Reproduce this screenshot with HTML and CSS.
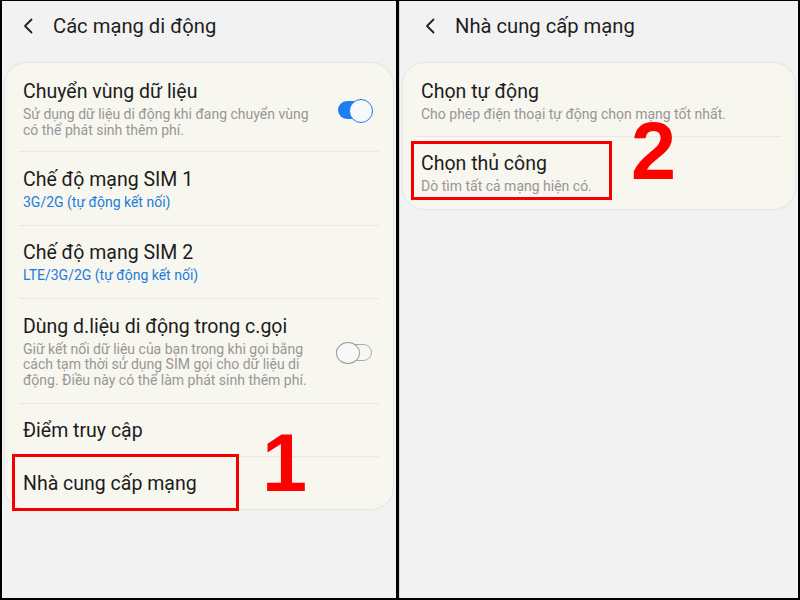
FILE: index.html
```html
<!DOCTYPE html>
<html lang="vi">
<head>
<meta charset="utf-8">
<title>Nhà cung cấp mạng</title>
<link rel="stylesheet" href="styles.css">
</head>
<body>
<div class="frame">
  <section class="panel panel-left">
    <header class="bar">
      <svg class="back" viewBox="0 0 12 16" width="12" height="16"><path d="M9.5 1.5 L3 8 L9.5 14.5" fill="none" stroke="#222" stroke-width="1.8" stroke-linecap="round" stroke-linejoin="round"/></svg>
      <h1 class="bar-title">Các mạng di động</h1>
    </header>
    <div class="card">
      <div class="item item-first">
        <div class="text">
          <div class="title">Chuyển vùng dữ liệu</div>
          <div class="sub">Sử dụng dữ liệu di động khi đang chuyển vùng<br>có thể phát sinh thêm phí.</div>
        </div>
        <span class="switch switch-on"></span>
      </div>
      <div class="item">
        <div class="text">
          <div class="title">Chế độ mạng SIM 1</div>
          <div class="sub sub-blue">3G/2G (tự động kết nối)</div>
        </div>
      </div>
      <div class="item">
        <div class="text">
          <div class="title">Chế độ mạng SIM 2</div>
          <div class="sub sub-blue">LTE/3G/2G (tự động kết nối)</div>
        </div>
      </div>
      <div class="item">
        <div class="text">
          <div class="title">Dùng d.liệu di động trong c.gọi</div>
          <div class="sub">Giữ kết nối dữ liệu của bạn trong khi gọi bằng<br>cách tạm thời sử dụng SIM gọi cho dữ liệu di<br>động. Điều này có thể làm phát sinh thêm phí.</div>
        </div>
        <span class="switch switch-off"></span>
      </div>
      <div class="item">
        <div class="text">
          <div class="title">Điểm truy cập</div>
        </div>
      </div>
      <div class="item item-last">
        <div class="text">
          <div class="title">Nhà cung cấp mạng</div>
        </div>
      </div>
    </div>
    <span class="mark mark-left"></span>
    <span class="num num-one">1</span>
  </section>
  <div class="divider"></div>
  <section class="panel panel-right">
    <header class="bar bar-right">
      <svg class="back" viewBox="0 0 12 16" width="12" height="16"><path d="M9.5 1.5 L3 8 L9.5 14.5" fill="none" stroke="#222" stroke-width="1.8" stroke-linecap="round" stroke-linejoin="round"/></svg>
      <h1 class="bar-title">Nhà cung cấp mạng</h1>
    </header>
    <div class="card">
      <div class="item item-first">
        <div class="text">
          <div class="title">Chọn tự động</div>
          <div class="sub">Cho phép điện thoại tự động chọn mạng tốt nhất.</div>
        </div>
      </div>
      <div class="item item-last">
        <div class="text">
          <div class="title">Chọn thủ công</div>
          <div class="sub">Dò tìm tất cả mạng hiện có.</div>
        </div>
      </div>
    </div>
    <span class="mark mark-right"></span>
    <span class="num num-two">2</span>
  </section>
</div>
</body>
</html>
```

FILE: styles.css
```css
* { box-sizing: border-box; }
html, body { margin: 0; padding: 0; }
body {
  width: 800px;
  height: 600px;
  background: #000;
  font-family: Roboto, "Noto Sans", "Liberation Sans", sans-serif;
  overflow: hidden;
}
.frame {
  width: 800px;
  height: 600px;
  display: flex;
  background: #000;
  padding: 1px 2px 2px 2px;
}
.panel {
  position: relative;
  background: #f2f2f2;
  height: 100%;
  padding: 0 3px;
}
.panel-left { width: 394px; }
.divider {
  width: 4px;
  height: 100%;
  background: #000;
  border-right: 1px solid #d8d8d8;
}
.panel-right { flex: 1; }

.bar {
  height: 62px;
  display: flex;
  align-items: center;
  padding-left: 17px;
  padding-bottom: 12px;
}
.bar-right { padding-left: 21px; }
.back { display: block; flex: none; margin-right: 19px; }
.bar-title {
  margin: 0;
  font-size: 20.2px;
  font-weight: 400;
  color: #1e1e1e;
}

.card {
  background: #f7f6ef;
  border-radius: 22px;
  padding: 0 14px;
  box-shadow: 0 0 0 1px #e6e5de;
}
.item {
  display: flex;
  align-items: center;
  padding: 17.5px 7px 14.5px 4px;
  border-bottom: 1px solid #e9e8e1;
}
.item-first { padding-top: 19px; padding-bottom: 13px; }
.item-last { border-bottom: none; }
.text { flex: 1; min-width: 0; }
.title {
  font-size: 19.5px;
  line-height: 20px;
  color: #1c1c1c;
  white-space: nowrap;
}
.sub {
  margin-top: 5px;
  font-size: 14px;
  line-height: 15.5px;
  color: #979797;
  white-space: nowrap;
}
.sub-blue { color: #1b7ddc; }

.switch {
  position: relative;
  flex: none;
  display: block;
}
.switch-on {
  width: 34px;
  height: 18px;
  border-radius: 9px;
  background: #1f7df2;
}
.switch-on::after {
  content: "";
  position: absolute;
  right: -1px;
  top: -2px;
  width: 22px;
  height: 22px;
  border-radius: 50%;
  background: #f8f8f8;
  border: 1.5px solid #1f7df2;
}
.switch-off {
  width: 36px;
  height: 17px;
  border-radius: 9px;
  border: 1.5px solid #a9a9a9;
}
.switch-off::after {
  content: "";
  position: absolute;
  left: -1.5px;
  top: -3px;
  width: 22px;
  height: 20px;
  border-radius: 50%;
  background: #f8f8f8;
  border: 1.5px solid #9c9c9c;
}

.mark {
  position: absolute;
  border: 3px solid #f40000;
}
.mark-left { left: 10px; top: 453px; width: 227px; height: 57px; }
.mark-right { left: 11px; top: 140px; width: 201px; height: 59px; }

.num {
  position: absolute;
  font-family: "Liberation Sans", Arial, sans-serif;
  font-weight: 700;
  font-size: 81px;
  line-height: 50px;
  color: #ff0000;
}
.num-one { left: 260px; top: 437px; }
.num-two { left: 231px; top: 125px; }
```
